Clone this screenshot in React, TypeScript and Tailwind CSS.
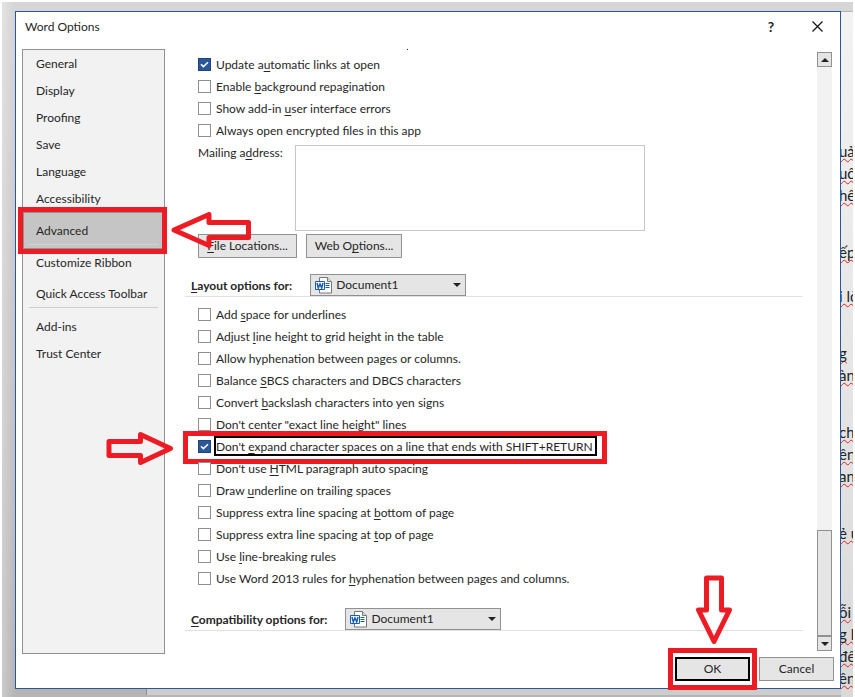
import React from 'react';

interface Option {
  before: string;
  letter?: string;
  after?: string;
  checked?: boolean;
  focused?: boolean;
}

const generalOptions: Option[] = [
  { before: 'Update a', letter: 'u', after: 'tomatic links at open', checked: true },
  { before: 'Enable ', letter: 'b', after: 'ackground repagination' },
  { before: 'Show add-in ', letter: 'u', after: 'ser interface errors' },
  { before: 'Always open encrypted files in this app' },
];

const layoutOptions: Option[] = [
  { before: 'Add ', letter: 's', after: 'pace for underlines' },
  { before: 'Adjust ', letter: 'l', after: 'ine height to grid height in the table' },
  { before: 'Allow hyphenation between pages or columns.' },
  { before: 'Balance ', letter: 'S', after: 'BCS characters and DBCS characters' },
  { before: 'Convert ', letter: 'b', after: 'ackslash characters into yen signs' },
  { before: "Don't ", letter: 'c', after: 'enter "exact line height" lines' },
  {
    before: "Don't ",
    letter: 'e',
    after: 'xpand character spaces on a line that ends with SHIFT+RETURN',
    checked: true,
    focused: true,
  },
  { before: "Don't use ", letter: 'H', after: 'TML paragraph auto spacing' },
  { before: 'Draw ', letter: 'u', after: 'nderline on trailing spaces' },
  { before: 'Suppress extra line spacing at ', letter: 'b', after: 'ottom of page' },
  { before: 'Suppress extra line spacing at ', letter: 't', after: 'op of page' },
  { before: 'Use ', letter: 'l', after: 'ine-breaking rules' },
  { before: 'Use Word 2013 rules for ', letter: 'h', after: 'yphenation between pages and columns.' },
];

// Paragraphs of the document that shows past the dialog's right edge
const documentText = [
  ['uả', 'uố', 'hể'],
  ['', 'ếp', '', 'i lò'],
  ['', 'g', 'àn'],
  ['', 'ch', 'ên', 'an'],
  ['', 'ẻ u'],
  ['', '', 'ỗi', 'g lo', 'đê', 'ên'],
];

interface AccessTextProps {
  before?: string;
  letter?: string;
  after?: string;
}

// Caption with its keyboard letter underlined
const AccessText: React.FC<AccessTextProps> = ({ before, letter, after }) => (
  <>
    {before}
    {letter && <span className="underline underline-offset-2 [text-decoration-skip-ink:none]">{letter}</span>}
    {after}
  </>
);

const OptionRow = ({ option, id }: { option: Option; id: string }) => (
  <div className="relative flex h-[22px] items-center pl-[13px]">
    <span className="relative flex h-[13px] w-[13px] shrink-0">
      <input
        id={id}
        type="checkbox"
        defaultChecked={option.checked}
        className="peer h-[13px] w-[13px] appearance-none border border-[#8f8f8f] bg-white checked:border-[#1e4579] checked:bg-[#2b579a]"
      />
      <svg
        viewBox="0 0 13 13"
        fill="none"
        stroke="white"
        strokeWidth="1.5"
        className="pointer-events-none absolute inset-0 hidden h-[13px] w-[13px] peer-checked:block"
      >
        <path d="M3 6.2l2.4 2.4L10 4.2" />
      </svg>
    </span>
    <label
      htmlFor={id}
      className={
        option.focused
          ? 'ml-[3px] h-5 border-2 border-black pr-0.5 leading-[18px] whitespace-nowrap'
          : 'ml-[5px] pt-0.5 whitespace-nowrap'
      }
    >
      <AccessText before={option.before} letter={option.letter} after={option.after} />
    </label>
    {option.focused && (
      <div className="pointer-events-none absolute -top-1 -left-0.5 h-[33px] w-[424px] border-5 border-[#ed1c24]">
        <svg
          viewBox="0 0 68 34"
          fill="none"
          stroke="#ed1c24"
          strokeWidth="5"
          strokeLinejoin="round"
          className="absolute -top-[5px] right-full mr-[14px] h-[34px] w-[68px]"
        >
          <path d="M3 10.5H34.5V3.5L64.5 17.5L34.5 31.5V24.5H3Z" />
        </svg>
      </div>
    )}
  </div>
);

const WordIcon = () => (
  <svg viewBox="0 0 17 17" className="pointer-events-none absolute top-[3px] left-[5px] h-[17px] w-[17px]">
    <path d="M4.5.5h8l4 4v11.5h-12z" fill="white" stroke="#777" />
    <path d="M12.5.5v4h4" fill="#ddd" stroke="#777" />
    <path d="M10.5 6.5h4M10.5 8.5h4M10.5 10.5h4" stroke="#185abd" />
    <path d="M.5 4.5h9v8h-9z" fill="white" stroke="#185abd" />
    <path d="M2 6l1.3 5L5 7l1.7 4L8 6" fill="none" stroke="#185abd" strokeWidth="1.5" />
  </svg>
);

const SectionHeading = ({ letter, text, id }: { letter: string; text: string; id: string }) => (
  <div className="flex items-center border-b border-[#e1e1e1] pl-1.5">
    <label htmlFor={id} className="pt-0.5 pr-[18px] font-bold">
      <AccessText letter={letter} after={text} />
    </label>
    <div className="relative">
      <WordIcon />
      <select
        id={id}
        className="block h-[22px] w-[156px] appearance-none border border-[#919191] bg-[#e5e5e5] pl-[25px]"
      >
        <option>Document1</option>
      </select>
      <svg viewBox="0 0 8 4" className="pointer-events-none absolute top-[9px] right-[5px] h-1 w-2">
        <path d="M0 0h8L4 4z" fill="#222" />
      </svg>
    </div>
  </div>
);

const NavItem = ({ children }: { children: React.ReactNode }) => (
  <button type="button" className="flex h-[27px] w-full items-center pl-[13px] text-left">
    {children}
  </button>
);

export default function App() {
  return (
    <div className="min-h-screen bg-white p-0.5 font-[Lato,'Noto_Sans',sans-serif] text-xs text-[#262626]">
      <div className="flex overflow-hidden bg-linear-to-b from-[#d6d6d6] to-[#b4b4b4]">
        <div className="w-[13px] shrink-0 bg-linear-to-r from-white/30 to-transparent" />

        <div className="min-w-0 flex-1 pt-[9px]">
          <main className="border border-[#2b579a] bg-white">
            {/* Title bar */}
            <header className="flex h-[37px] items-start justify-between pl-[9px]">
              <h1 className="leading-[30px]">Word Options</h1>
              <div className="flex">
                <button type="button" aria-label="Help" className="h-[29px] w-[46px] text-sm font-bold">
                  ?
                </button>
                <button type="button" aria-label="Close" className="flex h-[29px] w-[46px] items-center justify-center">
                  <svg viewBox="0 0 11 11" stroke="#111" strokeWidth="1.2" className="h-[11px] w-[11px]">
                    <path d="M.5.5l10 10M10.5.5l-10 10" />
                  </svg>
                </button>
              </div>
            </header>

            <div className="flex pl-1.5">
              {/* Categories */}
              <nav className="w-[143px] shrink-0 border border-[#919191] bg-[#f2f2f2]">
                <NavItem>General</NavItem>
                <NavItem>Display</NavItem>
                <NavItem>Proofing</NavItem>
                <NavItem>Save</NavItem>
                <NavItem>Language</NavItem>
                <NavItem>Accessibility</NavItem>
                <div className="relative">
                  <button
                    type="button"
                    className="flex h-[37px] w-full items-center border border-[#919191] bg-[#c5c5c5] pl-3 text-left"
                  >
                    Advanced
                  </button>
                  <div className="pointer-events-none absolute inset-x-1.5 bottom-1 h-px bg-[#d4d4d4]" />
                  <div className="pointer-events-none absolute -inset-y-[5px] -right-[3px] -left-[5px] border-5 border-[#ed1c24]">
                    <svg
                      viewBox="0 0 80 37"
                      fill="none"
                      stroke="#ed1c24"
                      strokeWidth="5"
                      strokeLinejoin="round"
                      className="absolute top-0 left-full ml-[9px] h-[37px] w-[80px]"
                    >
                      <path d="M3 18L38 2.5V10.5H77.5V25.5H38V33.5Z" />
                    </svg>
                  </div>
                </div>
                <NavItem>Customize Ribbon</NavItem>
                <div className="mx-1.5 border-b border-[#cfcfcf] pt-1">
                  <button type="button" className="flex h-[27px] items-center pl-[7px] whitespace-nowrap">
                    Quick Access Toolbar
                  </button>
                </div>
                <div className="pt-[5px]">
                  <NavItem>Add-ins</NavItem>
                  <NavItem>Trust Center</NavItem>
                </div>
              </nav>

              {/* Advanced settings */}
              <section className="min-w-0 flex-1 pr-[14px] pb-[23px] pl-5">
                <div className="mb-[3px] ml-[222px] h-px w-px bg-[#262626]" />
                {generalOptions.map((option, i) => (
                  <OptionRow key={i} id={`general-${i}`} option={option} />
                ))}

                <div className="flex pt-1 pl-[13px]">
                  <label htmlFor="mailing" className="w-[97px]">
                    <AccessText before="Mailing a" letter="d" after="dress:" />
                  </label>
                  <textarea id="mailing" className="h-[86px] w-[350px] resize-none border border-[#c6c6c6]" />
                </div>
                <div className="mt-[3px] mb-4 flex gap-[9px] pl-[13px]">
                  <button type="button" className="h-6 w-[99px] border border-[#919191] bg-[#e5e5e5]">
                    <AccessText letter="F" after="ile Locations..." />
                  </button>
                  <button type="button" className="h-6 w-24 border border-[#919191] bg-[#e5e5e5]">
                    <AccessText before="Web O" letter="p" after="tions..." />
                  </button>
                </div>

                <SectionHeading id="layout-doc" letter="L" text="ayout options for:" />
                <div className="pt-1.5 pb-[19px]">
                  {layoutOptions.map((option, i) => (
                    <OptionRow key={i} id={`layout-${i}`} option={option} />
                  ))}
                </div>
                <SectionHeading id="compat-doc" letter="C" text="ompatibility options for:" />
              </section>

              {/* Scrollbar */}
              <div className="my-[3px] mr-2 flex w-[15px] flex-col bg-[#f2f2f2]">
                <button
                  type="button"
                  aria-label="Scroll up"
                  className="flex h-[15px] items-center justify-center border border-[#919191] bg-[#e5e5e5]"
                >
                  <svg viewBox="0 0 8 4" className="h-1 w-2">
                    <path d="M0 4h8L4 0z" fill="#222" />
                  </svg>
                </button>
                <div className="flex-1" />
                <div className="h-[106px] border border-[#919191] bg-[#e5e5e5]" />
                <button
                  type="button"
                  aria-label="Scroll down"
                  className="flex h-[15px] items-center justify-center border border-[#919191] bg-[#e5e5e5]"
                >
                  <svg viewBox="0 0 8 4" className="h-1 w-2">
                    <path d="M0 0h8L4 4z" fill="#222" />
                  </svg>
                </button>
              </div>
            </div>

            <footer className="flex justify-end gap-[9px] pt-[3px] pr-1.5 pb-[7px]">
              <div className="relative">
                <button type="button" className="block h-6 w-[75px] border-2 border-black bg-[#e5e5e5]">
                  OK
                </button>
                <div className="pointer-events-none absolute -inset-x-[7px] -inset-y-[9px] border-5 border-[#ed1c24]">
                  <svg
                    viewBox="0 0 38 70"
                    fill="none"
                    stroke="#ed1c24"
                    strokeWidth="5"
                    strokeLinejoin="round"
                    className="absolute bottom-full left-[22px] mb-2 h-[70px] w-[38px]"
                  >
                    <path d="M11.5 3H26.5V35H34.5L19 66.5L3.5 35H11.5Z" />
                  </svg>
                </div>
              </div>
              <button type="button" className="h-6 w-[75px] border border-[#919191] bg-[#e5e5e5]">
                Cancel
              </button>
            </footer>
          </main>
          <div className="flex h-1.5">
            <div className="w-[132px] border-r border-[#8f8f8f]" />
            <div className="flex-1 bg-[#cdcdcd]" />
          </div>
        </div>

        {/* Document behind the dialog */}
        <div className="mt-[9px] w-3 shrink-0 overflow-hidden border-t border-[#b5b5b5] bg-linear-to-b from-[#f3f3f3] to-[#d9d9d9] pt-[128px] text-[15px] leading-[22px] text-[#222]">
          {documentText.map((lines, i) => (
            <div key={i} className="mb-[13px] -ml-0.5">
              {lines.map((line, j) => (
                <p
                  key={j}
                  className="h-[22px] whitespace-nowrap underline decoration-[#e02020] decoration-wavy decoration-1 [text-decoration-skip-ink:none]"
                >
                  {line}
                </p>
              ))}
            </div>
          ))}
        </div>
      </div>
    </div>
  );
}
